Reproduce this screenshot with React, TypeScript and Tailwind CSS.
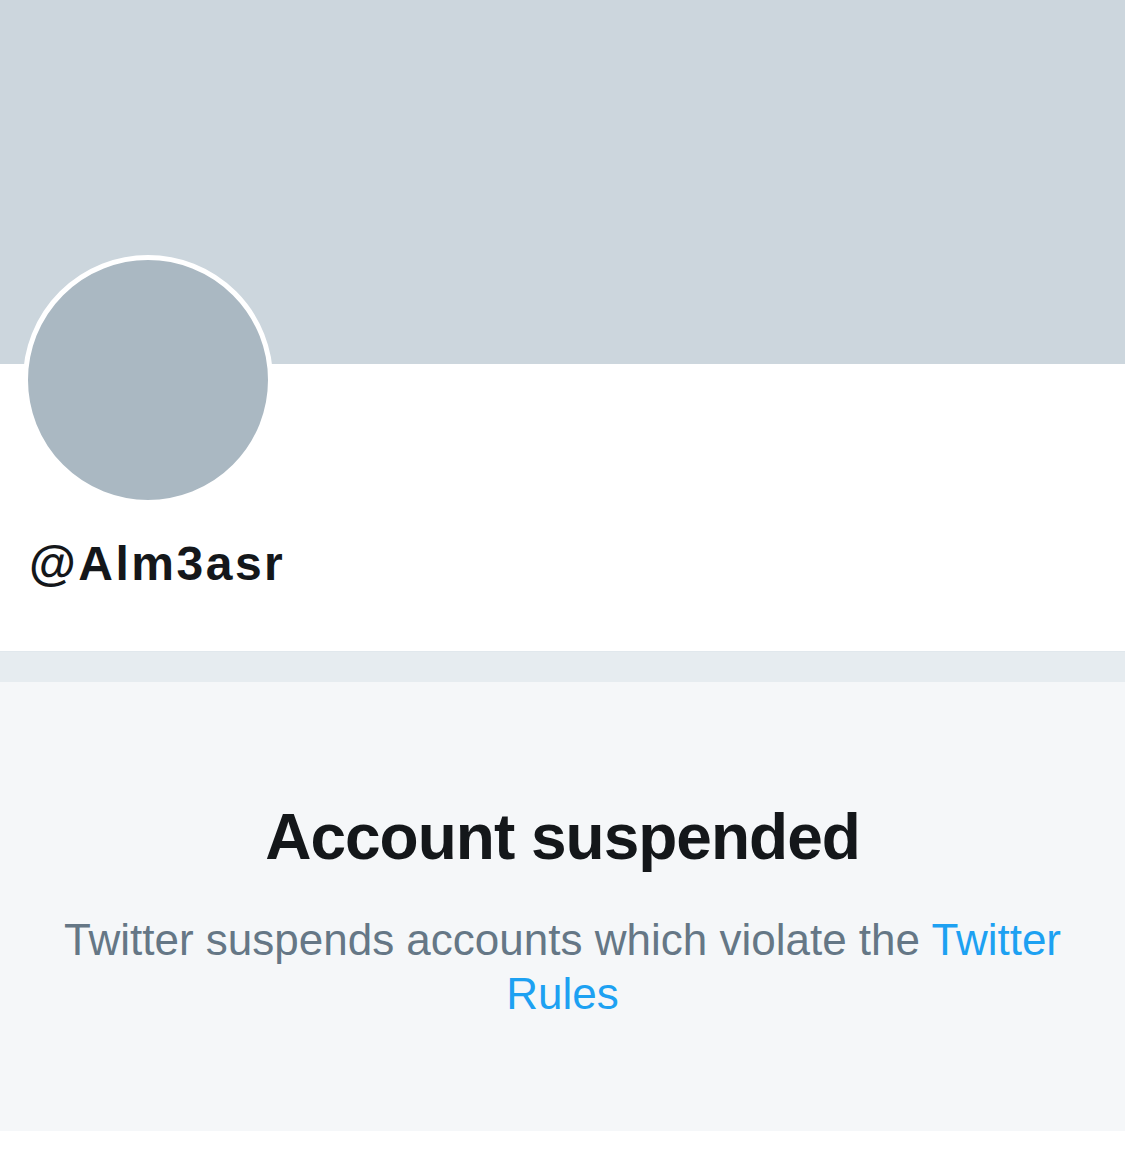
export default function App() {
  return (
    <div className="min-h-[1155px] w-full bg-white font-['Liberation_Sans',Arial,sans-serif]">
      {/* banner */}
      <div className="h-[364px] w-full bg-[#ccd6dd]" />

      {/* avatar + handle */}
      <div className="px-[23px] pb-[60px]">
        <div className="-mt-[109px] h-[250px] w-[250px] rounded-full border-[5px] border-white bg-[#aab8c2]" />
        <h1 className="mt-[32px] pl-[6px] text-[48px] font-bold leading-[54px] tracking-[2.5px] text-[#14171a]">
          @Alm3asr
        </h1>
      </div>

      <div className="h-[31px] w-full border-t border-[#e1e8ed] bg-[#e6ecf0]" />

      {/* suspended notice */}
      <section className="bg-[#f5f7f9] px-[40px] pt-[117px] pb-[110px] text-center">
        <h2 className="text-[64px] font-bold leading-[76px] tracking-[-1px] text-[#14171a]">
          Account suspended
        </h2>
        <p className="mt-[38px] text-[44px] leading-[54px] text-[#657786]">
          Twitter suspends accounts which violate the{" "}
          <a href="#" className="text-[#1da1f2]">
            Twitter Rules
          </a>
        </p>
      </section>
    </div>
  );
}
